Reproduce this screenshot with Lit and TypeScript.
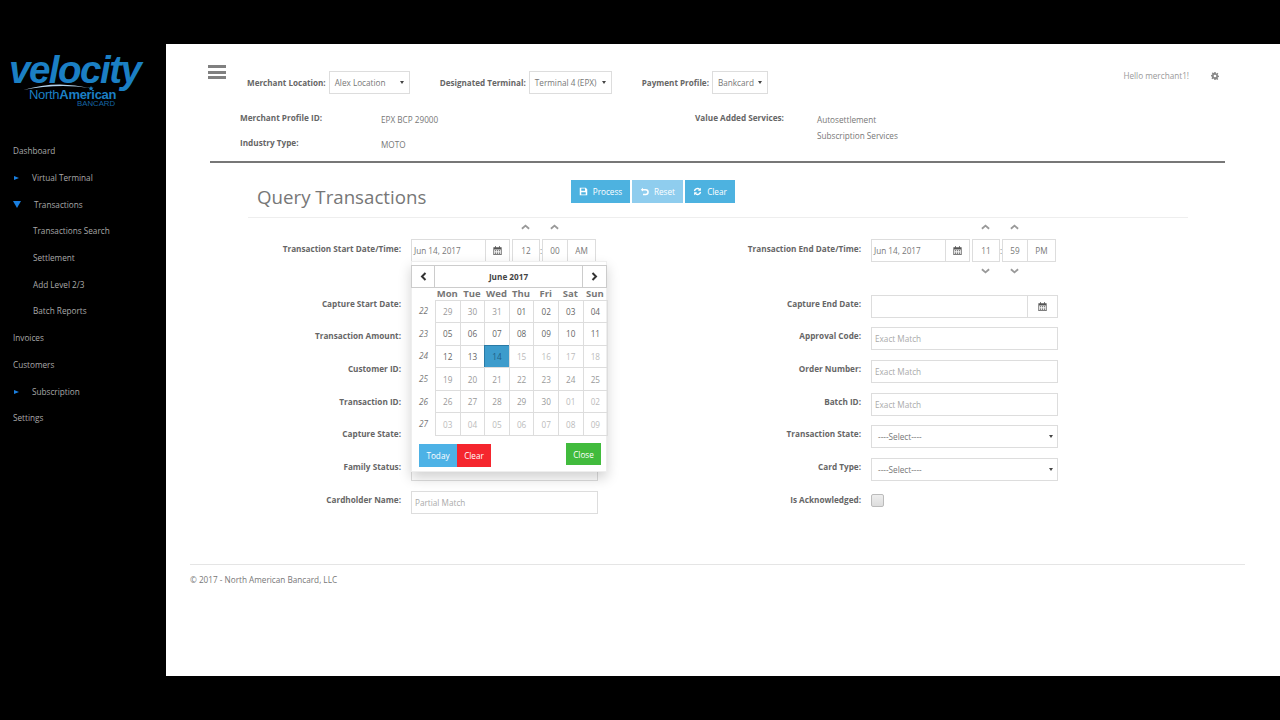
import { LitElement, html, css, svg } from 'lit';
import { customElement } from 'lit/decorators.js';
import { classMap } from 'lit/directives/class-map.js';

const calIcon = html`<svg class="ico" viewBox="0 0 12 12"><path fill="currentColor" fill-rule="evenodd" d="M3 0h1v1.500h4V0h1v1.500h2.500V12H.500V1.500H3zM1.500 4.500V11h9V4.500zM2.500 5.500h1.500v1.200H2.500zM5 5.500h2v1.200H5zM8 5.500h1.500v1.200H8zM2.500 7.600h1.500v1.200H2.500zM5 7.600h2v1.200H5zM8 7.600h1.500v1.200H8zM2.500 9.300h1.500v1h-1.500zM5 9.300h2v1H5zM8 9.300h1.500v1H8z"/></svg>`;
const chevUp = html`<svg viewBox="0 0 10 6"><path d="M1 5l4-3.500L9 5" fill="none" stroke="currentColor" stroke-width="2"/></svg>`;
const chevDown = html`<svg viewBox="0 0 10 6"><path d="M1 1l4 3.500L9 1" fill="none" stroke="currentColor" stroke-width="2"/></svg>`;
const saveIcon = svg`<path fill="currentColor" fill-rule="evenodd" d="M1 1h8l2 2v8H1zM3 2v3h5V2zM3 7v3h6V7z"/>`;
const undoIcon = svg`<path fill="none" stroke="currentColor" stroke-width="2" d="M3 3.500h4.500a3 3 0 0 1 0 6.500H4"/><path fill="currentColor" d="M1 3.500L4 1v5z"/>`;
const refreshIcon = svg`<path fill="none" stroke="currentColor" stroke-width="1.900" d="M2 5.500A4 4 0 0 1 9 3.500M10 6.500A4 4 0 0 1 3 8.500"/><path fill="currentColor" d="M10.500 1v4h-4zM1.500 11V7h4z"/>`;

@customElement('side-nav')
class SideNav extends LitElement {
  static styles = css`
    :host { display: block; width: 166px; flex: none; color: #a9a9a9; font: 8.200px "Open Sans", sans-serif; }
    .logo { height: 94px; padding: 8px 0 0 9px; box-sizing: border-box; color: #1b7fc4; position: relative; }
    .word { font: italic bold 38.500px/36px "Liberation Sans", sans-serif; letter-spacing: -1.500px; display: block; }
    .swoosh { position: absolute; left: 23px; top: 39px; }
    .na { position: absolute; left: 29px; top: 46px; font: 13px/10px "Liberation Sans", sans-serif; letter-spacing: -.3px; }
    .na b { font-weight: 700; }
    .bank { position: absolute; left: 77px; top: 56px; font: 7.800px/7px "Liberation Sans", sans-serif; color: #1565a5; }
    ul { list-style: none; margin: 0; padding: 0; }
    li { height: 26.700px; line-height: 26px; display: flex; align-items: center; padding-left: 13px; }
    .arrow { width: 19px; flex: none; display: flex; }
    .arrow i { display: block; border-left: 5px solid #1a7fe0; border-top: 2.500px solid transparent; border-bottom: 2.500px solid transparent; margin-left: 1px; }
    .open { width: 21px; }
    .open i { border: 0 solid transparent; border-top: 7px solid #1a7fe0; border-left-width: 4px; border-right-width: 4px; margin: 0; }
    .sub { padding-left: 33px; }
  `;
  render() {
    const items = [
      { t: 'Dashboard' },
      { t: 'Virtual Terminal', a: 1 },
      { t: 'Transactions', a: 2 },
      { t: 'Transactions Search', s: 1 },
      { t: 'Settlement', s: 1 },
      { t: 'Add Level 2/3', s: 1 },
      { t: 'Batch Reports', s: 1 },
      { t: 'Invoices' },
      { t: 'Customers' },
      { t: 'Subscription', a: 1 },
      { t: 'Settings' },
    ];
    return html`
      <div class="logo">
        <span class="word">velocity</span>
        <svg class="swoosh" width="72" height="10" viewBox="0 0 72 10"><path d="M0 7Q33 -3 67 5Q35 0 0 7z" fill="#b5d5ee"/><path d="M68 3l.8 1.600 1.700.2-1.300 1.100.4 1.700-1.600-.9-1.600.9.4-1.700-1.300-1.100 1.700-.2z" fill="#1b7fc4"/></svg>
        <span class="na">North<b>American</b></span>
        <span class="bank">BANCARD</span>
      </div>
      <ul>
        ${items.map(i => html`<li class=${classMap({ sub: !!i.s })}>
          ${i.a ? html`<span class=${classMap({ arrow: true, open: i.a === 2 })}><i></i></span>` : ''}${i.t}
        </li>`)}
      </ul>
    `;
  }
}

@customElement('date-picker')
class DatePicker extends LitElement {
  static styles = css`
    :host { display: block; position: absolute; left: 0; top: 22px; width: 196px; height: 211px; background: #fff; border: 1px solid #eee; box-sizing: border-box; box-shadow: 0 6px 12px rgba(0,0,0,.18); padding: 3px 0 0 0; font: 8.200px "Open Sans", sans-serif; color: #555; }
    .nav { display: grid; grid-template-columns: 23px 1fr 24px; height: 23px; margin-right: -1px; }
    .nav div { border: 1px solid #ccc; margin-left: -1px; display: flex; align-items: center; justify-content: center; font-weight: 700; color: #444; }
    .nav svg { width: 7px; height: 9px; }
    .dow { display: grid; grid-template-columns: 23px repeat(7, 24.600px); height: 12px; line-height: 12px; text-align: center; font-weight: 700; font-size: 9.500px; color: #777; }
    .grid { display: grid; grid-template-columns: 23px repeat(7, 24.600px); grid-auto-rows: 22.600px; }
    .wk { font-style: italic; color: #777; display: flex; align-items: center; justify-content: center; }
    .d { border: 1px solid #ddd; margin: 0 -1px -1px 0; display: flex; align-items: center; justify-content: center; color: #666; }
    .off { color: #bbb; }
    .mid { color: #999; }
    .sel { background: #3d9ccc; border-color: #2a7aa5; color: #1f5f85; }
    .foot { display: flex; justify-content: space-between; padding: 8px 5px 0 7px; align-items: flex-start; }
    .btns { display: flex; margin-top: 1px; }
    .b { height: 22px; display: flex; align-items: center; justify-content: center; color: #fff; }
    .today { width: 38px; height: 23px; background: #4db2e6; }
    .clear { width: 34px; height: 23px; background: #f5262e; }
    .close { width: 35px; background: #41bb3d; }
  `;
  render() {
    const rows: [number, string[], (s: string, j: number) => string][] = [
      [22, ['29','30','31','01','02','03','04'], (_, j) => (j < 3 ? 'mid' : '')],
      [23, ['05','06','07','08','09','10','11'], () => ''],
      [24, ['12','13','14','15','16','17','18'], (_, j) => (j === 2 ? 'sel' : j > 2 ? 'off' : '')],
      [25, ['19','20','21','22','23','24','25'], () => 'mid'],
      [26, ['26','27','28','29','30','01','02'], (_, j) => (j > 4 ? 'off' : 'mid')],
      [27, ['03','04','05','06','07','08','09'], () => 'off'],
    ];
    return html`
      <div class="nav">
        <div><svg viewBox="0 0 7 9"><path d="M5.500 1L2 4.500 5.500 8" fill="none" stroke="#333" stroke-width="2"/></svg></div>
        <div>June 2017</div>
        <div><svg viewBox="0 0 7 9"><path d="M1.500 1L5 4.500 1.500 8" fill="none" stroke="#333" stroke-width="2"/></svg></div>
      </div>
      <div class="dow"><span></span>${['Mon','Tue','Wed','Thu','Fri','Sat','Sun'].map(d => html`<span>${d}</span>`)}</div>
      <div class="grid">
        ${rows.map(([w, days, cls]) => html`<div class="wk">${w}</div>${days.map((d, j) => html`<div class="d ${cls(d, j)}">${d}</div>`)}`)}
      </div>
      <div class="foot">
        <div class="btns"><div class="b today">Today</div><div class="b clear">Clear</div></div>
        <div class="b close">Close</div>
      </div>
    `;
  }
}

@customElement('app-root')
class AppRoot extends LitElement {
  static styles = css`
    :host { display: flex; width: 1280px; height: 720px; background: #000; padding: 44px 0; box-sizing: border-box; font: 8.200px "Open Sans", sans-serif; color: #777; overflow: hidden; }
    .page { flex: 1; height: 632px; background: #fff; position: relative; padding: 0 35px 0 24px; box-sizing: border-box; }
    .top { display: flex; height: 68px; padding-left: 18px; }
    .burger { width: 18px; height: 14px; margin-top: 21px; display: flex; flex-direction: column; justify-content: space-between; }
    .burger i { display: block; height: 3px; background: #808080; }
    .filters { display: flex; margin: 27px 0 0 21px; align-items: flex-start; }
    .filters label { font-weight: 700; font-size: 8.100px; color: #666; line-height: 23px; margin-right: 3px; }
    .filters label.gap { margin-left: 30px; }
    .ddl { height: 23px; border: 1px solid #ddd; box-sizing: border-box; display: flex; align-items: center; justify-content: space-between; padding: 0 5px; color: #777; background: #fff; }
    .ddl::after { content: ""; border-top: 3.500px solid #444; border-left: 2px solid transparent; border-right: 2px solid transparent; }
    .hello { margin: 27px 0 0 auto; display: flex; gap: 22px; align-items: center; height: 9px; padding-right: 26px; color: #999; line-height: 9px; }
    .hello svg { width: 8px; height: 8px; color: #888; }
    .info { display: grid; grid-template-columns: 141px 314px 122px 1fr; margin-left: 50px; grid-auto-rows: 25px; height: 49px; color: #777; }
    .info b { color: #666; line-height: 13px; margin-top: -1px; }
    .info span { line-height: 15px; }
    .rule { height: 2px; background: #777; margin: 0 20px; width: 1015px; }
    .head { margin: 17px 0 0 58px; width: 940px; height: 37px; border-bottom: 1px solid #eee; display: flex; }
    h1 { margin: 0; font: 18.700px/34px "Open Sans", sans-serif; color: #777; width: 314px; padding-left: 9px; }
    .actions { display: flex; gap: 2px; height: 23px; }
    .btn { background: #4db2e0; color: #fff; display: flex; align-items: center; justify-content: center; gap: 5px; height: 23px; }
    .btn svg { width: 9px; height: 9px; }
    .dim { background: #8fcdee; }
    .form { display: grid; grid-template-columns: 460px 1fr; margin-left: 20px; padding-top: 5px; }
    .col { display: flex; flex-direction: column; }
    .row { display: flex; height: 32.700px; }
    .lab { width: 191px; flex: none; text-align: right; font-weight: 700; color: #666; line-height: 13px; padding-top: 5px; margin-right: 10px; box-sizing: border-box; }
    .field { flex: none; width: 187px; height: 23px; margin-top: 3px; border: 1px solid #ddd; box-sizing: border-box; padding-left: 3px; line-height: 21px; color: #aaa; background: #fff; }
    .sel { display: flex; justify-content: space-between; align-items: center; padding: 0 4px 0 6px; color: #777; }
    .sel::after { content: ""; border-top: 3.500px solid #444; border-left: 2px solid transparent; border-right: 2px solid transparent; }
    .date-row { height: 68.500px; }
    .date-row .lab { padding-top: 19px; }
    .dt { position: relative; flex: none; display: flex; align-items: flex-start; margin-top: 15.500px; height: 23px; color: #777; }
    .box { border: 1px solid #ddd; box-sizing: border-box; height: 23px; display: flex; align-items: center; justify-content: center; }
    .box.date { justify-content: flex-start; padding-left: 2px; width: 75px; }
    .box.cal { width: 25px; margin-left: -1px; }
    .ico { width: 9px; height: 9px; color: #555; }
    .spacer { width: 2px; }
    .sp { position: relative; display: flex; align-items: center; }
    .colon { width: 2px; text-align: center; line-height: 23px; }
    .meridian { width: 29px; margin-left: -1px; }
    .chev { position: absolute; width: 9px; height: 6px; color: #999; left: 50%; margin-left: -5px; display: block; }
    .chev svg { display: block; width: 9px; height: 6px; }
    .chev-up { top: -15px; }
    .chev-dn { top: 29px; }
    .cap { display: flex; width: 187px; height: 23px; margin-top: 3px; }
    .cap .box.in { flex: 1; }
    .cap .box.cal { width: 31px; }
    .check { width: 13px; height: 13px; border: 1px solid #bbb; border-radius: 2px; background: linear-gradient(#eee, #ddd); margin-top: 6px; flex: none; box-sizing: border-box; }
    footer { margin-top: 43.500px; border-top: 1px solid #e5e5e5; padding-top: 8px; line-height: 13px; color: #777; }
  `;

  spinner(v: string, w: number, down = false) {
    return html`<div class="sp">
      <div class="box" style="width:${w}px">${v}</div>
      <span class="chev-up chev">${chevUp}</span>
      ${down ? html`<span class="chev-dn chev">${chevDown}</span>` : ''}
    </div>`;
  }

  render() {
    const left = [
      ['Capture Start Date:', ''], ['Transaction Amount:', ''], ['Customer ID:', ''], ['Transaction ID:', ''],
      ['Capture State:', ''], ['Family Status:', ''], ['Cardholder Name:', 'Partial Match'],
    ];
    return html`
      <side-nav></side-nav>
      <div class="page">
        <div class="top">
          <div class="burger"><i></i><i></i><i></i></div>
          <div class="filters">
            <label>Merchant Location:</label><div class="ddl" style="width:81px">Alex Location</div>
            <label class="gap">Designated Terminal:</label><div class="ddl" style="width:83px">Terminal 4 (EPX)</div>
            <label class="gap">Payment Profile:</label><div class="ddl" style="width:56px">Bankcard</div>
          </div>
          <div class="hello">Hello merchant1!
            <svg viewBox="0 0 12 12"><path fill="currentColor" fill-rule="evenodd" d="M5 0h2l.3 1.700 1.300.5L10 1.200 11 2.500 10 3.900l.4 1.300L12 5.500v2l-1.600.3-.5 1.300 1 1.400-1.400 1.400-1.400-1-1.300.5L7 12H5l-.3-1.600-1.300-.5-1.400 1L.6 9.500l1-1.400-.5-1.300L0 6.500v-2l1.600-.3.5-1.300-1-1.400L2.500.6l1.400 1 .9-.4zM6 4a2 2 0 1 0 0 4 2 2 0 0 0 0-4z"/></svg>
          </div>
        </div>
        <div class="info">
          <b>Merchant Profile ID:</b><span>EPX BCP 29000</span><b>Value Added Services:</b><span>Autosettlement</span>
          <b>Industry Type:</b><span>MOTO</span><b></b><span style="margin-top:-9px">Subscription Services</span>
        </div>
        <div class="rule"></div>
        <div class="head">
          <h1>Query Transactions</h1>
          <div class="actions">
            <div class="btn" style="width:59px"><svg viewBox="0 0 12 12">${saveIcon}</svg>Process</div>
            <div class="btn dim" style="width:51px"><svg viewBox="0 0 12 12">${undoIcon}</svg>Reset</div>
            <div class="btn" style="width:50px"><svg viewBox="0 0 12 12">${refreshIcon}</svg>Clear</div>
          </div>
        </div>
        <div class="form">
          <div class="col">
            <div class="row date-row">
              <div class="lab">Transaction Start Date/Time:</div>
              <div class="dt">
                <div class="box date">Jun 14, 2017</div><div class="box cal">${calIcon}</div>
                <span class="spacer"></span>
                ${this.spinner('12', 28)}<span class="colon">:</span>${this.spinner('00', 26)}
                <div class="box meridian">AM</div>
                <date-picker></date-picker>
              </div>
            </div>
            ${left.map(([l, p]) => html`<div class="row"><div class="lab">${l}</div><div class="field">${p}</div></div>`)}
          </div>
          <div class="col">
            <div class="row date-row">
              <div class="lab">Transaction End Date/Time:</div>
              <div class="dt">
                <div class="box date">Jun 14, 2017</div><div class="box cal">${calIcon}</div>
                <span class="spacer"></span>
                ${this.spinner('11', 28, true)}<span class="colon">:</span>${this.spinner('59', 26, true)}
                <div class="box meridian">PM</div>
              </div>
            </div>
            <div class="row"><div class="lab">Capture End Date:</div><div class="cap"><div class="box in"></div><div class="box cal">${calIcon}</div></div></div>
            ${['Approval Code:', 'Order Number:', 'Batch ID:'].map(l => html`<div class="row"><div class="lab">${l}</div><div class="field">Exact Match</div></div>`)}
            ${['Transaction State:', 'Card Type:'].map(l => html`<div class="row"><div class="lab">${l}</div><div class="field sel">----Select----</div></div>`)}
            <div class="row"><div class="lab">Is Acknowledged:</div><div class="check"></div></div>
          </div>
        </div>
        <footer>© 2017 - North American Bancard, LLC</footer>
      </div>
    `;
  }
}
